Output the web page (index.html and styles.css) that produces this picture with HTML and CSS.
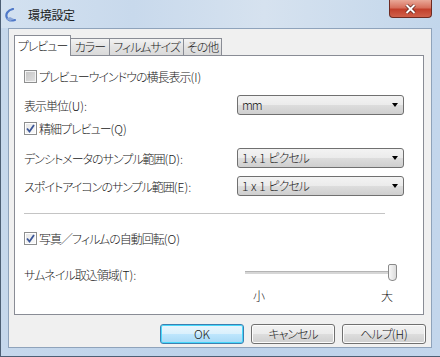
FILE: index.html
```html
<!DOCTYPE html>
<html lang="ja">
<head>
    <meta charset="UTF-8">
    <meta name="viewport" content="width=device-width, initial-scale=1.0">
    <title>環境設定</title>
    <link rel="stylesheet" href="styles.css">
</head>
<body>
    <div class="window">
        <div class="titlebar">
            <svg class="app-icon" width="12" height="14" viewBox="0 0 12 14">
                <path d="M9 1 C4 2 1 6 3 10 C4 12 7 13 11 12" fill="none" stroke="#4f78c8" stroke-width="2.2" stroke-linecap="round"/>
                <path d="M2 11 L6 9 L10 11 L6 13 Z" fill="#8aa6d8"/>
            </svg>
            <span class="title">環境設定</span>
            <div class="close">
                <svg width="11" height="10" viewBox="0 0 11 10">
                    <path d="M1.5 1 L9.5 9 M9.5 1 L1.5 9" stroke="#5a1d16" stroke-width="3.4"/>
                    <path d="M1.5 1 L9.5 9 M9.5 1 L1.5 9" stroke="#fff" stroke-width="2"/>
                </svg>
            </div>
        </div>
        <div class="client">
            <div class="tabs">
                <div class="tab active t1">プレビュー</div>
                <div class="tab t2">カラー</div>
                <div class="tab t3">フィルムサイズ</div>
                <div class="tab t4">その他</div>
            </div>
            <div class="panel">
                <div class="row r1">
                    <span class="checkbox off"></span>
                    <span>プレビューウインドウの横長表示<span class="key">(I)</span></span>
                </div>
                <div class="row r2">
                    <span class="label">表示単位<span class="key">(U):</span></span>
                    <div class="select">mm<span class="arrow"></span></div>
                </div>
                <div class="row r3">
                    <span class="checkbox on">
                        <svg width="9" height="9" viewBox="0 0 9 9"><path d="M1 4.5 L3.5 7.5 L8 1" fill="none" stroke="#3b5698" stroke-width="1.8"/></svg>
                    </span>
                    <span>精細プレビュー<span class="key">(Q)</span></span>
                </div>
                <div class="row r4">
                    <span class="label">デンシトメータのサンプル範囲<span class="key">(D):</span></span>
                    <div class="select"><span class="key">1 x 1 </span>ピクセル<span class="arrow"></span></div>
                </div>
                <div class="row r5">
                    <span class="label">スポイトアイコンのサンプル範囲<span class="key">(E):</span></span>
                    <div class="select"><span class="key">1 x 1 </span>ピクセル<span class="arrow"></span></div>
                </div>
                <div class="separator"></div>
                <div class="row r6">
                    <span class="checkbox on">
                        <svg width="9" height="9" viewBox="0 0 9 9"><path d="M1 4.5 L3.5 7.5 L8 1" fill="none" stroke="#3b5698" stroke-width="1.8"/></svg>
                    </span>
                    <span>写真／フィルムの自動回転<span class="key">(O)</span></span>
                </div>
                <div class="row r7">
                    <span class="label">サムネイル取込領域<span class="key">(T):</span></span>
                    <div class="slider">
                        <div class="track"></div>
                        <div class="thumb"></div>
                    </div>
                </div>
                <div class="ticks">
                    <span>小</span>
                    <span>大</span>
                </div>
            </div>
            <div class="buttons">
                <div class="btn default"><span class="key">OK</span></div>
                <div class="btn">キャンセル</div>
                <div class="btn">ヘルプ<span class="key">(H)</span></div>
            </div>
        </div>
    </div>
</body>
</html>
```

FILE: styles.css
```css
body {
    margin: 0;
    font-family: "Noto Sans CJK JP", "Noto Sans", sans-serif;
    font-size: 12px;
    font-weight: 300;
    font-feature-settings: "palt" 1;
    letter-spacing: -1px;
    color: #222;
    background: #fff;
}
.key {
    letter-spacing: 0;
}
.window {
    width: 440px;
    height: 357px;
    box-sizing: border-box;
    border-left: 1px solid #4d5f74;
    border-bottom: 1px solid #4d5f74;
    background: linear-gradient(to right, #c6d8ec, #bcd2ea 50%, #c3d6ec);
    display: flex;
    flex-direction: column;
}
.titlebar {
    height: 28px;
    display: flex;
    align-items: center;
    padding: 0 8px 0 3px;
    background: linear-gradient(to right, #d3e1f0, #c8d9ec 30%, #d6e2ef 60%, #c2d6eb);
}
.app-icon {
    margin-top: 2px;
}
.title {
    margin-left: 12px;
    font-size: 12px;
    font-weight: 400;
    letter-spacing: -0.3px;
    color: #1c1c1c;
    margin-top: 1px;
}
.close {
    margin-left: auto;
    align-self: flex-start;
    width: 43px;
    height: 18px;
    box-sizing: border-box;
    border: 1px solid #6e2b22;
    border-top: none;
    border-radius: 0 0 4px 4px;
    background: linear-gradient(#e9a898 0%, #d7705d 45%, #c2402c 55%, #d0604a 100%);
    display: flex;
    align-items: center;
    justify-content: center;
}
.client {
    flex: 1;
    margin: 0 8px 8px 7px;
    border: 1px solid #8fa3bb;
    background: #f0f0f0;
}
.tabs {
    display: flex;
    align-items: flex-end;
    height: 21px;
    margin: 6px 0 0 5px;
    position: relative;
    z-index: 1;
}
.tab {
    height: 17px;
    margin-bottom: 1px;
    margin-left: -1px;
    box-sizing: border-box;
    border: 1px solid #898c95;
    border-bottom: none;
    background: linear-gradient(#f3f3f3, #e3e3e3 50%, #dadada);
    text-align: center;
    line-height: 16px;
    white-space: nowrap;
}
.tab.active {
    height: 21px;
    margin-bottom: 0;
    margin-left: 0;
    background: #fff;
    line-height: 19px;
    position: relative;
    z-index: 1;
}
.t1 { width: 57px; }
.t2 { width: 40px; }
.t3 { width: 75px; }
.t4 { width: 39px; }
.panel {
    width: 410px;
    height: 260px;
    box-sizing: border-box;
    margin: -1px 0 0 5px;
    border: 1px solid #898c95;
    background: #fff;
    padding: 0 18px 0 9px;
}
.row {
    height: 20px;
    display: flex;
    align-items: center;
    white-space: nowrap;
}
.r1 { margin-top: 10px; }
.r2 { margin-top: 9px; }
.r3 { margin-top: 3px; }
.r4 { margin-top: 10px; }
.r5 { margin-top: 8px; }
.r6 { margin-top: 14px; }
.r7 { margin-top: 16px; }
.label {
    width: 213px;
    flex-shrink: 0;
}
.checkbox {
    width: 13px;
    height: 13px;
    box-sizing: border-box;
    border: 1px solid #8e8f8f;
    margin-right: 2px;
    display: flex;
    align-items: center;
    justify-content: center;
}
.checkbox.off {
    background: linear-gradient(135deg, #c4c4c4, #e2e2e2);
    box-shadow: inset 0 0 0 1px #f4f4f4;
}
.checkbox.on {
    background: linear-gradient(135deg, #e4e4e4, #fbfbfb);
    box-shadow: inset 0 0 0 1px #fff;
}
.select {
    width: 167px;
    height: 20px;
    box-sizing: border-box;
    border: 1px solid #707070;
    border-radius: 3px;
    background: linear-gradient(#f3f3f3, #ebebeb 50%, #dddddd 50%, #cfcfcf);
    padding-left: 4px;
    line-height: 18px;
    position: relative;
}
.arrow {
    position: absolute;
    right: 5px;
    top: 7px;
    width: 0;
    height: 0;
    border-left: 3.5px solid transparent;
    border-right: 3.5px solid transparent;
    border-top: 4px solid #000;
}
.separator {
    width: 361px;
    margin-top: 17px;
    border-top: 1px solid #c4c4c4;
}
.slider {
    position: relative;
    width: 152px;
    height: 20px;
    margin-left: 8px;
}
.track {
    position: absolute;
    left: 0;
    right: 4px;
    top: 7px;
    height: 2px;
    background: #d6d6d6;
    border-top: 1px solid #b4b4b4;
}
.thumb {
    position: absolute;
    right: 0;
    top: 0;
    width: 9px;
    height: 17px;
    box-sizing: border-box;
    border: 1px solid #8a8a8a;
    border-radius: 2px 2px 4px 4px;
    background: linear-gradient(to right, #f8f8f8, #dcdcdc);
}
.ticks {
    display: flex;
    justify-content: space-between;
    width: 139px;
    margin: 5px 0 0 229px;
    height: 14px;
    line-height: 14px;
}
.buttons {
    display: flex;
    justify-content: flex-end;
    gap: 7px;
    margin-top: 9px;
    padding-right: 5px;
}
.btn {
    width: 84px;
    height: 20px;
    box-sizing: border-box;
    border: 1px solid #707070;
    border-radius: 3px;
    background: linear-gradient(#f2f2f2, #ebebeb 50%, #dddddd 50%, #cfcfcf);
    box-shadow: inset 0 0 0 1px #fcfcfc;
    text-align: center;
    line-height: 18px;
}
.btn.default {
    border-color: #3c7fb1;
    background: linear-gradient(#eaf6fd, #d9f0fc 50%, #bee6fd 50%, #a7d9f5);
    box-shadow: inset 0 0 0 1px #48d8fb;
}
```
